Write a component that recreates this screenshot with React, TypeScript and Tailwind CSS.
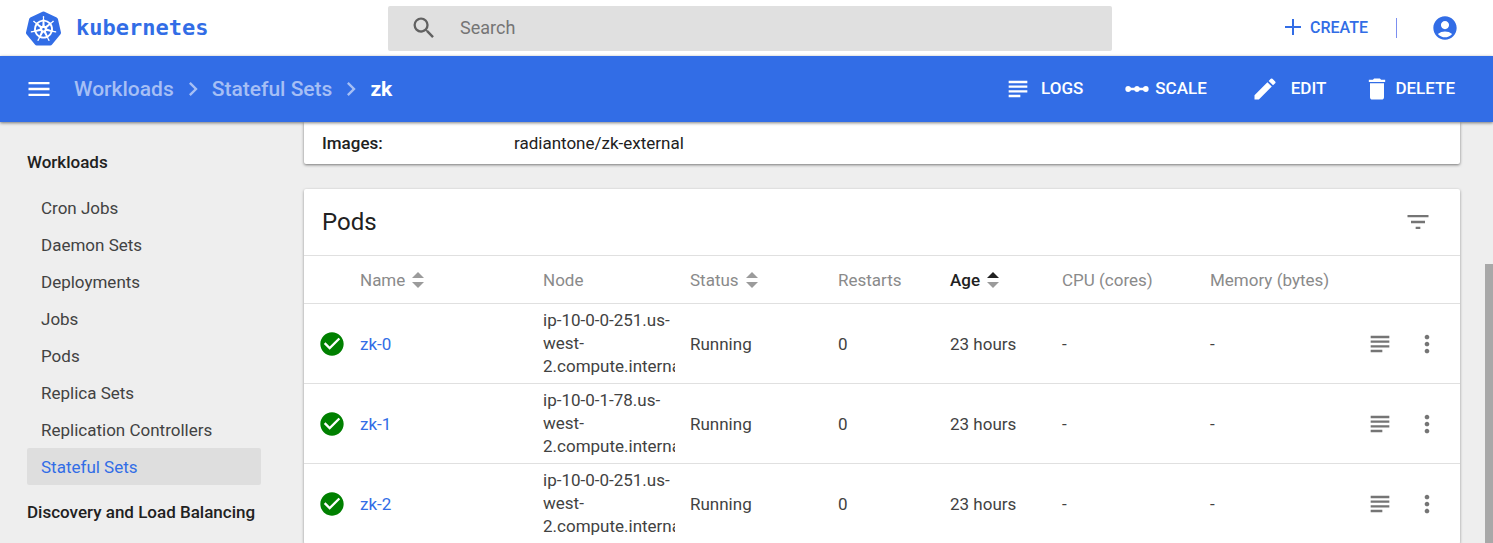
import React from "react";
import {
  MdAccountCircle,
  MdCheckCircle,
  MdChevronRight,
  MdDelete,
  MdEdit,
  MdFilterList,
  MdLinearScale,
  MdMenu,
  MdMoreVert,
  MdSearch,
  MdSubject,
} from "react-icons/md";
import { SiKubernetes } from "react-icons/si";

type SortState = "none" | "asc";

interface Pod {
  name: string;
  node: string;
  status: string;
  restarts: number;
  age: string;
}

const pods: Pod[] = [
  { name: "zk-0", node: "ip-10-0-0-251.us-west-2.compute.internal", status: "Running", restarts: 0, age: "23 hours" },
  { name: "zk-1", node: "ip-10-0-1-78.us-west-2.compute.internal", status: "Running", restarts: 0, age: "23 hours" },
  { name: "zk-2", node: "ip-10-0-0-251.us-west-2.compute.internal", status: "Running", restarts: 0, age: "23 hours" },
];

const workloads = [
  "Cron Jobs",
  "Daemon Sets",
  "Deployments",
  "Jobs",
  "Pods",
  "Replica Sets",
  "Replication Controllers",
  "Stateful Sets",
];

function SortIcon({ state }: { state: SortState }) {
  return (
    <svg width="12" height="16" viewBox="0 0 12 16" aria-hidden="true">
      <path d="M0 6 6 0l6 6z" fill={state === "asc" ? "#212121" : "#9b9b9b"} />
      <path d="M0 10h12l-6 6z" fill="#9b9b9b" />
    </svg>
  );
}

function SortButton({ label, state = "none" }: { label: string; state?: SortState }) {
  return (
    <button type="button" className="flex items-center gap-[7px]">
      {label}
      <SortIcon state={state} />
    </button>
  );
}

function TopBar() {
  return (
    <header className="flex h-14 shrink-0 items-center bg-white">
      <a href="#" className="flex w-[388px] shrink-0 items-center gap-[15px] pl-[26px] text-[#326de6]">
        <SiKubernetes size={35} />
        <span className="font-['DejaVu_Sans_Mono',monospace] text-[22px] font-bold leading-7">kubernetes</span>
      </a>
      <label className="flex h-[45px] min-w-0 flex-1 items-center gap-[22px] rounded-xs bg-[#e0e0e0] pl-[22px]">
        <MdSearch size={28} className="shrink-0 text-[#616161]" />
        <input
          type="search"
          aria-label="Search"
          placeholder="Search"
          className="min-w-0 flex-1 bg-transparent text-lg outline-none placeholder:text-[#757575]"
        />
      </label>
      <div className="flex w-[381px] shrink-0 items-center justify-end pr-[34px] text-[#326de6]">
        <button type="button" className="flex items-center gap-[3px] font-medium">
          <svg width="28" height="28" viewBox="0 0 28 28" stroke="currentColor" strokeWidth="2" aria-hidden="true">
            <path d="M6 13h16M14 5v16" />
          </svg>
          CREATE
        </button>
        <span className="ml-7 mr-[34px] h-5 w-px bg-[#7c8ff0]" />
        <button type="button" aria-label="Account">
          <MdAccountCircle size={28} />
        </button>
      </div>
    </header>
  );
}

function ActionBar() {
  return (
    <div className="relative flex h-[66px] shrink-0 items-center bg-[#326de6] pl-[25px] pr-[38px] text-white shadow-[0_1px_3px_rgba(0,0,0,0.5)]">
      <button type="button" aria-label="Menu">
        <MdMenu size={28} />
      </button>
      <nav aria-label="Breadcrumb" className="ml-[21px] flex items-center gap-[5px] text-[21px] font-medium leading-7 text-[#a6bff5]">
        <a href="#">Workloads</a>
        <MdChevronRight size={28} />
        <a href="#">Stateful Sets</a>
        <MdChevronRight size={28} />
        <span className="font-bold text-white">zk</span>
      </nav>
      <div className="ml-auto flex items-center text-[17px] font-medium">
        <button type="button" className="flex items-center gap-[9px]">
          <MdSubject size={28} />
          LOGS
        </button>
        <button type="button" className="ml-10 flex items-center gap-1">
          <MdLinearScale size={28} />
          SCALE
        </button>
        <button type="button" className="ml-11 flex items-center gap-3">
          <MdEdit size={28} />
          EDIT
        </button>
        <button type="button" className="ml-[37px] flex items-center gap-1">
          <MdDelete size={28} />
          DELETE
        </button>
      </div>
    </div>
  );
}

function Sidebar() {
  return (
    <nav aria-label="Resources" className="w-[304px] shrink-0 pl-[27px] pr-[43px] pt-7 leading-6">
      <a href="#" className="block font-medium text-[#212121]">
        Workloads
      </a>
      <ul className="mt-[15px]">
        {workloads.map((item) => (
          <li key={item}>
            <a
              href="#"
              className={
                item === "Stateful Sets"
                  ? "flex h-[37px] items-center rounded-xs bg-[#dedede] pl-[14px] text-[#326de6]"
                  : "flex h-[37px] items-center pl-[14px] text-[#424242]"
              }
            >
              {item}
            </a>
          </li>
        ))}
      </ul>
      <a href="#" className="mt-[15px] block whitespace-nowrap font-medium text-[#212121]">
        Discovery and Load Balancing
      </a>
    </nav>
  );
}

function PodsCard() {
  return (
    <section className="mt-[25px] rounded-xs bg-white shadow-[0_1px_3px_rgba(0,0,0,0.4)]">
      <div className="flex h-[66px] items-center justify-between pl-[18px] pr-7">
        <h2 className="text-2xl text-[#212121]">Pods</h2>
        <button type="button" aria-label="Filter" className="text-[#757575]">
          <MdFilterList size={28} />
        </button>
      </div>
      <table className="w-full table-fixed text-left">
        <colgroup>
          <col className="w-14" />
          <col />
          <col className="w-[147px]" />
          <col className="w-[148px]" />
          <col className="w-28" />
          <col className="w-28" />
          <col className="w-[148px]" />
          <col className="w-[148px]" />
          <col className="w-[102px]" />
        </colgroup>
        <thead>
          <tr className="h-12 border-y border-[#e0e0e0] text-[#8a8a8a] *:font-normal">
            <th aria-label="State" />
            <th>
              <SortButton label="Name" />
            </th>
            <th>Node</th>
            <th>
              <SortButton label="Status" />
            </th>
            <th>Restarts</th>
            <th>
              <div className="font-medium text-[#212121]">
                <SortButton label="Age" state="asc" />
              </div>
            </th>
            <th>CPU (cores)</th>
            <th>Memory (bytes)</th>
            <th aria-label="Actions" />
          </tr>
        </thead>
        <tbody>
          {pods.map((pod) => (
            <tr key={pod.name} className="h-20 border-b border-[#e0e0e0] text-[#424242]">
              <td className="pl-[14px]">
                <MdCheckCircle size={28} className="text-[#008000]" />
              </td>
              <td>
                <a href="#" className="text-[#326de6]">
                  {pod.name}
                </a>
              </td>
              <td className="pr-[15px]">
                <div className="overflow-hidden leading-[23px]">{pod.node}</div>
              </td>
              <td>{pod.status}</td>
              <td>{pod.restarts}</td>
              <td>{pod.age}</td>
              <td>-</td>
              <td>-</td>
              <td>
                <div className="flex items-center justify-end gap-[19px] pr-[19px] text-[#757575]">
                  <button type="button" aria-label={`Logs for ${pod.name}`}>
                    <MdSubject size={28} />
                  </button>
                  <button type="button" aria-label={`Actions for ${pod.name}`}>
                    <MdMoreVert size={28} />
                  </button>
                </div>
              </td>
            </tr>
          ))}
        </tbody>
      </table>
    </section>
  );
}

export default function App() {
  return (
    <div className="flex h-screen flex-col overflow-hidden bg-[#eeeeee] font-[Roboto,sans-serif] text-base">
      <TopBar />
      <ActionBar />
      <div className="flex min-h-0 flex-1 overflow-hidden text-[17px] leading-6">
        <Sidebar />
        <main className="min-w-0 flex-1">
          <dl className="flex h-[42px] items-center rounded-b-xs bg-white pl-[18px] text-[#212121] shadow-[0_1px_3px_rgba(0,0,0,0.5)]">
            <dt className="w-48 font-medium">Images:</dt>
            <dd>radiantone/zk-external</dd>
          </dl>
          <PodsCard />
        </main>
        <div className="ml-[25px] flex w-2 shrink-0 flex-col pt-[142px]">
          <div className="flex-1 bg-[#a8a8a8]" />
        </div>
      </div>
    </div>
  );
}
